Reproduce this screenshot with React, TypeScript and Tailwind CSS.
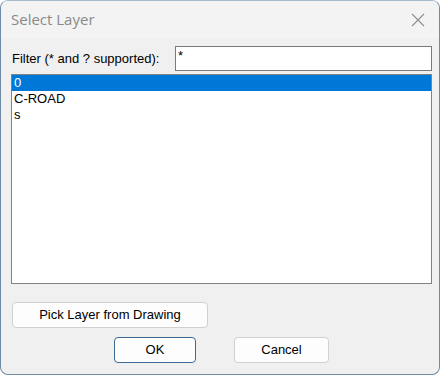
const layers = ["0", "C-ROAD", "s"];

export default function App() {
  return (
    <div className="w-[440px] h-[375px] overflow-hidden rounded-[8px] border border-[#6f8ba6] border-t-[#a9bccd] bg-[#f0f0f0] font-['Liberation_Sans',Arial,sans-serif] text-[13px] text-black">
      {/* title bar */}
      <div className="flex h-[37px] items-center justify-between bg-[#f3f3f3] pl-[10px] pr-[12px]">
        <span className="font-['Open_Sans',sans-serif] text-[15px] text-[#8a8a8a]">Select Layer</span>
        <svg width="14" height="14" viewBox="0 0 14 14" className="mr-[2px]">
          <path d="M1 1 L13 13 M13 1 L1 13" stroke="#8f8f8f" strokeWidth="1.1" fill="none" />
        </svg>
      </div>

      <div className="flex flex-col pl-[10px] pr-[7px] pt-[8px]">
        <div className="flex items-center justify-between">
          <span className="pl-[1px]">Filter (* and ? supported):</span>
          <div className="h-[25px] w-[257px] border border-[#7a7a7a] bg-white pl-[2px] pt-[1px] leading-[15px]">*</div>
        </div>

        <div className="mt-[3px] h-[210px] border border-[#828282] bg-white">
          {layers.map((l, i) => (
            <div
              key={l}
              className={
                i === 0
                  ? "h-[16px] bg-[#0078d7] pl-[2px] leading-[16px] text-white"
                  : "h-[16px] pl-[2px] leading-[16px]"
              }
            >
              {l}
            </div>
          ))}
        </div>

        <button className="mt-[18px] ml-[1px] h-[26px] w-[196px] rounded-[4px] border border-[#d0d0d0] bg-[#fdfdfd]">
          Pick Layer from Drawing
        </button>

        <div className="mt-[9px] flex">
          <button className="ml-[103px] h-[26px] w-[82px] rounded-[4px] border border-[#3d6a94] bg-[#fdfdfd]">OK</button>
          <button className="ml-[38px] h-[26px] w-[95px] rounded-[4px] border border-[#d0d0d0] bg-[#fdfdfd]">Cancel</button>
        </div>
      </div>
    </div>
  );
}
